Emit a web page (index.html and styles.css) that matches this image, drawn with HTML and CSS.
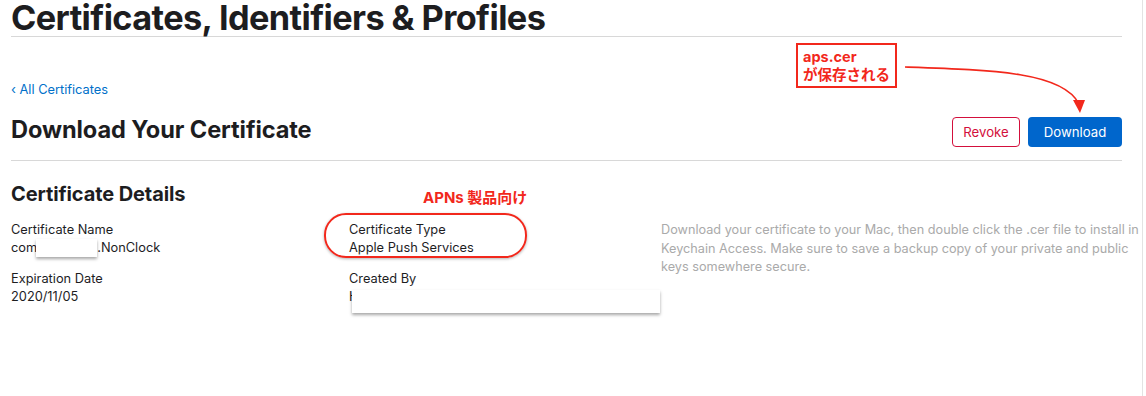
FILE: index.html
```html
<!DOCTYPE html>
<html lang="ja">
<head>
    <meta charset="UTF-8">
    <title>Download Your Certificate</title>
    <link rel="stylesheet" href="styles.css">
</head>
<body>
    <div class="frame">
        <header class="site-header">
            <h1>Certificates, Identifiers &amp; Profiles</h1>
        </header>

        <a class="back-link" href="#">&lsaquo; All Certificates</a>

        <div class="page-head">
            <h2>Download Your Certificate</h2>
            <div class="actions">
                <button class="btn btn-revoke">Revoke</button>
                <button class="btn btn-download">Download</button>
            </div>
        </div>

        <section class="details">
            <h3>Certificate Details</h3>
            <div class="details-grid">
                <div class="col">
                    <div class="field">
                        <div class="label">Certificate Name</div>
                        <div class="value">com<span class="mask mask-name"></span>.NonClock</div>
                    </div>
                    <div class="field">
                        <div class="label">Expiration Date</div>
                        <div class="value">2020/11/05</div>
                    </div>
                </div>
                <div class="col">
                    <div class="field field-type">
                        <div class="label">Certificate Type</div>
                        <div class="value">Apple Push Services</div>
                        <span class="note note-apns">APNs 製品向け</span>
                        <span class="ring"></span>
                    </div>
                    <div class="field">
                        <div class="label">Created By</div>
                        <div class="value">H<span class="mask mask-creator"></span></div>
                    </div>
                </div>
                <p class="help">Download your certificate to your Mac, then double click the .cer file to install in Keychain Access. Make sure to save a backup copy of your private and public keys somewhere secure.</p>
            </div>
        </section>

        <div class="note note-cer">aps.cer<br>が保存される</div>
        <svg class="arrow" width="200" height="60" viewBox="0 0 200 60">
            <path d="M2 5 C 90 8, 160 10, 176 42" fill="none" stroke="#f2281c" stroke-width="1.6"/>
            <path d="M170 38 L 182 38 L 177 51 Z" fill="#f2281c"/>
        </svg>
    </div>
</body>
</html>
```

FILE: styles.css
```css
* {
    box-sizing: border-box;
}

body {
    margin: 0;
    font-family: 'Inter', 'Noto Sans CJK JP', sans-serif;
    color: #1d1d1f;
    background: #fff;
}

.frame {
    position: relative;
    width: 1143px;
    height: 396px;
    padding: 0 20px 0 11px;
    border-right: 1px solid #e3e3e3;
}

.site-header {
    border-bottom: 1px solid #d8d8d8;
}

h1 {
    margin: 0;
    font-size: 34.3px;
    line-height: 36px;
    font-weight: 700;
    letter-spacing: -0.6px;
    white-space: nowrap;
}

.back-link {
    display: inline-block;
    margin-top: 45px;
    font-size: 12.8px;
    line-height: 16px;
    color: #0070c9;
    text-decoration: none;
}

.page-head {
    display: flex;
    justify-content: space-between;
    align-items: center;
    margin-top: 19px;
    padding-bottom: 13px;
    border-bottom: 1px solid #d8d8d8;
}

h2 {
    margin: 0;
    font-size: 23.6px;
    font-weight: 700;
    letter-spacing: -0.1px;
    position: relative;
    top: -3px;
}

.actions {
    display: flex;
    gap: 8px;
}

.btn {
    font-family: inherit;
    font-size: 13.2px;
    height: 30px;
    border-radius: 4px;
    cursor: pointer;
}

.btn-revoke {
    width: 68px;
    background: #fff;
    color: #d30f3c;
    border: 1px solid #d30f3c;
}

.btn-download {
    width: 94px;
    background: #0066cc;
    color: #fff;
    border: none;
}

.details h3 {
    margin: 21px 0 0;
    font-size: 20px;
    font-weight: 700;
    letter-spacing: -0.1px;
}

.details-grid {
    display: grid;
    grid-template-columns: 338px 312px 1fr;
    margin-top: 15px;
    margin-right: -18px;
}

.field {
    position: relative;
    font-size: 12.8px;
    line-height: 18px;
    margin-bottom: 13px;
}

.value {
    position: relative;
}

.mask {
    display: inline-block;
    vertical-align: top;
    background: #fff;
    box-shadow: 0 2px 3px rgba(0, 0, 0, 0.35);
}

.mask-name {
    width: 61px;
    height: 18px;
    margin-left: -1px;
}

.mask-creator {
    position: absolute;
    left: 3px;
    top: 2px;
    width: 308px;
    height: 23px;
}

.help {
    margin: 0;
    font-size: 12.7px;
    line-height: 18.5px;
    color: #aaa;
}

.note {
    position: absolute;
    color: #f2281c;
    font-weight: 700;
    font-size: 15px;
    line-height: 18px;
}

.note-apns {
    left: 74px;
    top: -32px;
    white-space: nowrap;
}

.ring {
    position: absolute;
    left: -25px;
    top: -8px;
    width: 203px;
    height: 45px;
    border: 2px solid #f2281c;
    border-radius: 22px;
    box-shadow: 0 1px 3px rgba(0, 0, 0, 0.3);
}

.note-cer {
    left: 796px;
    top: 43px;
    width: 101px;
    height: 45px;
    padding: 3px 5px;
    border: 2px solid #f2281c;
    font-size: 14.5px;
    line-height: 18px;
}

.arrow {
    position: absolute;
    left: 903px;
    top: 62px;
}
```
